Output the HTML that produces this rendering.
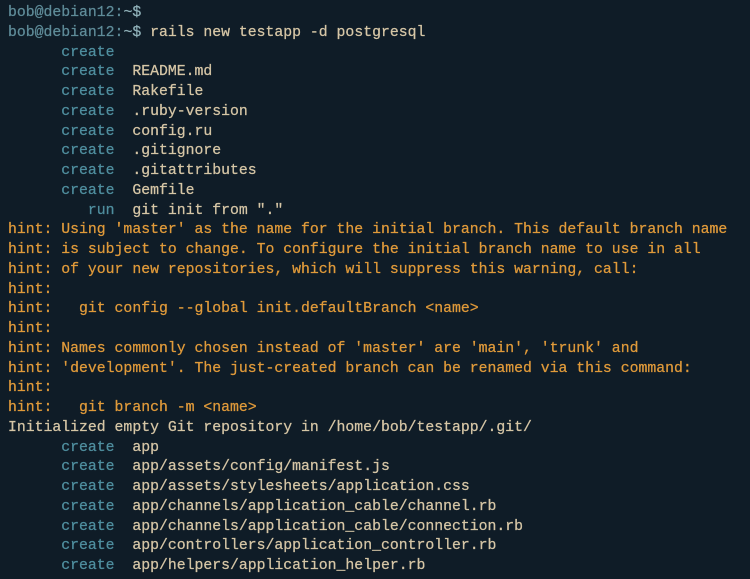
<!DOCTYPE html>
<html><head><meta charset="utf-8"><style>
html,body{margin:0;padding:0;background:#0f1c27;width:750px;height:579px;overflow:hidden}
pre{margin:0;padding:4px 0 0 8px;font-family:"Liberation Mono",monospace;font-size:14.8px;line-height:19.75px;color:#d6c6a6;white-space:pre;-webkit-text-stroke:0.25px}
.p{color:#5f8c99}.d{color:#8fb0b8}.c{color:#4f8e9e}.h{color:#e09a3a}.w{color:#d6c6a6}
</style></head><body><pre><span class="p">bob@debian12:</span><span class="d">~$</span>
<span class="p">bob@debian12:</span><span class="d">~$</span> rails new testapp -d postgresql
<span class="c">      create</span>
<span class="c">      create</span>  README.md
<span class="c">      create</span>  Rakefile
<span class="c">      create</span>  .ruby-version
<span class="c">      create</span>  config.ru
<span class="c">      create</span>  .gitignore
<span class="c">      create</span>  .gitattributes
<span class="c">      create</span>  Gemfile
<span class="c">         run</span>  git init from "."
<span class="h">hint: Using 'master' as the name for the initial branch. This default branch name
hint: is subject to change. To configure the initial branch name to use in all
hint: of your new repositories, which will suppress this warning, call:
hint:
hint:   git config --global init.defaultBranch &lt;name&gt;
hint:
hint: Names commonly chosen instead of 'master' are 'main', 'trunk' and
hint: 'development'. The just-created branch can be renamed via this command:
hint:
hint:   git branch -m &lt;name&gt;</span>
Initialized empty Git repository in /home/bob/testapp/.git/
<span class="c">      create</span>  app
<span class="c">      create</span>  app/assets/config/manifest.js
<span class="c">      create</span>  app/assets/stylesheets/application.css
<span class="c">      create</span>  app/channels/application_cable/channel.rb
<span class="c">      create</span>  app/channels/application_cable/connection.rb
<span class="c">      create</span>  app/controllers/application_controller.rb
<span class="c">      create</span>  app/helpers/application_helper.rb
</pre></body></html>
